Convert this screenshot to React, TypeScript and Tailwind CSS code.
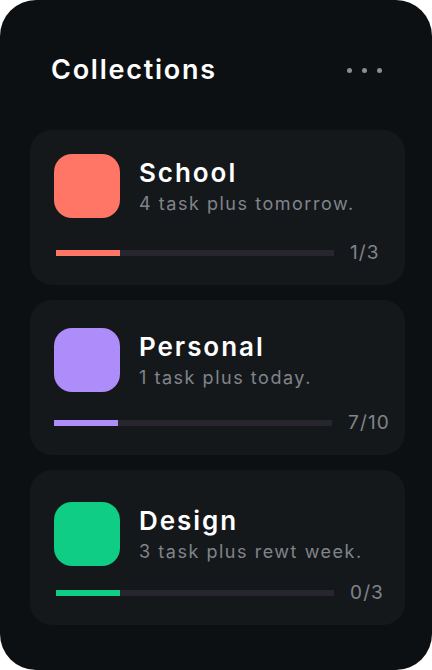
const collections = [
  {
    name: 'School',
    note: '4 task plus tomorrow.',
    count: '1/3',
    color: 'bg-[#ff7566]',
    top: 'pt-6',
    gap: 'mt-[23px]',
    bar: 'ml-[2px]',
  },
  {
    name: 'Personal',
    note: '1 task plus today.',
    count: '7/10',
    color: 'bg-[#ae8cf9]',
    top: 'pt-7',
    gap: 'mt-[19px]',
    bar: 'ml-0',
  },
  {
    name: 'Design',
    note: '3 task plus rewt week.',
    count: '0/3',
    color: 'bg-[#0fcd84]',
    top: 'pt-8',
    gap: 'mt-[15px]',
    bar: 'ml-[2px]',
  },
];

function CollectionCard({ item }: { item: (typeof collections)[number] }) {
  return (
    <div className={`h-[155px] rounded-[22px] bg-[#15181b] px-6 ${item.top}`}>
      <div className="flex items-start gap-[19px]">
        <div className={`h-16 w-[66px] shrink-0 rounded-[18px] ${item.color}`} />
        <div className="pt-[3px]">
          <p className="text-[26px] leading-8 font-semibold tracking-[0.075em] text-white">{item.name}</p>
          <p className="mt-[3px] text-[18px] leading-6 tracking-[0.085em] text-[#80848b]">{item.note}</p>
        </div>
      </div>
      <div className={`flex items-center ${item.gap}`}>
        <div className={`h-1.5 w-[278px] shrink-0 bg-[#27262f] ${item.bar}`}>
          <div className={`h-full w-16 ${item.color}`} />
        </div>
        <span className="ml-4 shrink-0 text-[19px] leading-6 tracking-[0.06em] text-[#80848b]">{item.count}</span>
      </div>
    </div>
  );
}

export default function App() {
  return (
    <div className="h-[670px] w-[432px] bg-white" style={{ fontFamily: 'Inter, "Noto Sans", sans-serif' }}>
      <div className="flex h-full flex-col rounded-[36px] bg-[#0d1012] pl-[30px] pr-[27px] pt-[54px]">
        <div className="flex items-center justify-between pl-[21px] pr-[23px]">
          <h1 className="text-[27px] leading-8 font-semibold tracking-[0.065em] text-white">Collections</h1>
          <div className="flex gap-[10px]">
            <span className="h-[5px] w-[5px] rounded-full bg-[#8a8d92]" />
            <span className="h-[5px] w-[5px] rounded-full bg-[#8a8d92]" />
            <span className="h-[5px] w-[5px] rounded-full bg-[#8a8d92]" />
          </div>
        </div>
        <div className="mt-[44px] flex flex-col gap-[15px]">
          {collections.map((c) => (
            <CollectionCard key={c.name} item={c} />
          ))}
        </div>
      </div>
    </div>
  );
}
